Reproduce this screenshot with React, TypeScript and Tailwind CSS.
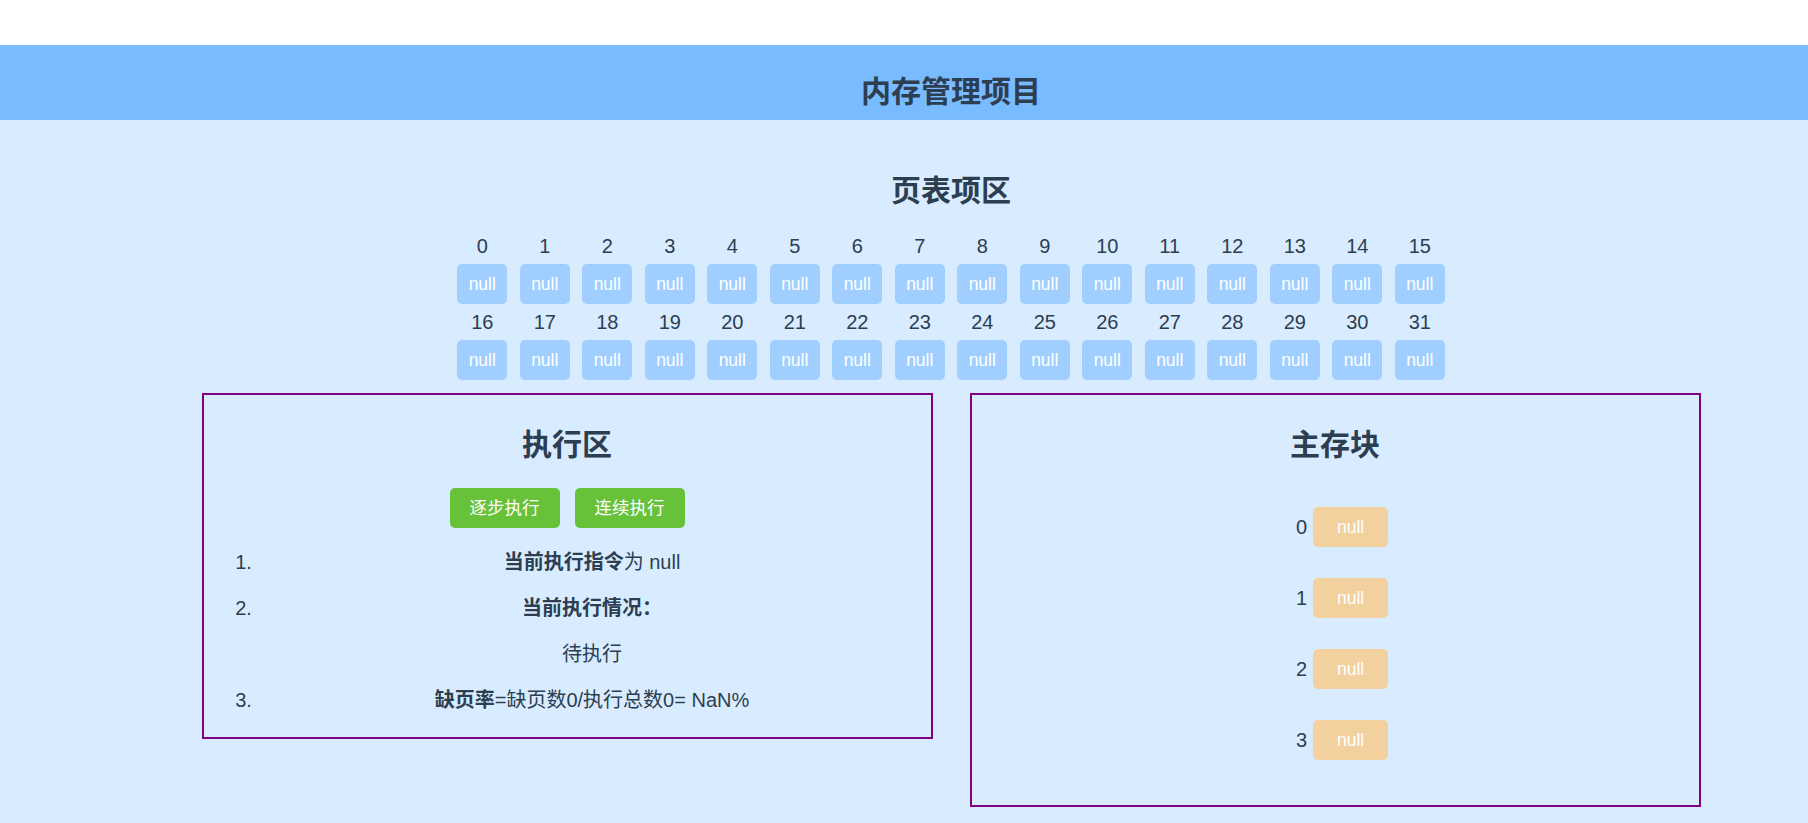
import React from "react";

const pages = Array.from({ length: 32 }, (_, i) => i);
const blocks = [0, 1, 2, 3];

function PageCell({ n }: { n: number }) {
  return (
    <div className="flex w-[50px] flex-col items-center">
      <div className="h-[24px] text-[20px] leading-[24px]">{n}</div>
      <div className="mt-[6px] flex h-[40px] w-[50px] items-center justify-center rounded-[5px] bg-[#a0cfff] text-[17.5px] text-white">
        null
      </div>
    </div>
  );
}

export default function App() {
  return (
    <div className="w-full overflow-hidden">
      <div className="min-h-[823px] w-[1902px] bg-[#d9ecff] font-['Liberation_Sans','Noto_Sans_CJK_SC',Arial,sans-serif] text-[#2c3e50]">
        <div className="h-[45px] bg-white" />
        <header className="h-[75px] bg-[#79bbff] pt-[32px] text-center">
          <h2 className="text-[30px] font-bold leading-[30px]">内存管理项目</h2>
        </header>

        <section className="pt-[56px]">
          <h2 className="text-center text-[30px] font-bold leading-[30px]">页表项区</h2>
          <div className="mt-[28px] flex flex-col items-center gap-[6px]">
            <div className="flex gap-[12.5px]">
              {pages.slice(0, 16).map((n) => (
                <PageCell key={n} n={n} />
              ))}
            </div>
            <div className="flex gap-[12.5px]">
              {pages.slice(16).map((n) => (
                <PageCell key={n} n={n} />
              ))}
            </div>
          </div>
        </section>

        <div className="mt-[13px] flex items-start justify-center gap-[37px]">
          <div className="h-[346px] w-[731px] border-2 border-[#800080] pt-[35px]">
            <h2 className="text-center text-[30px] font-bold leading-[30px]">执行区</h2>
            <div className="mt-[28px] flex justify-center gap-[15px]">
              <button className="h-[40px] w-[110px] rounded-[5px] bg-[#67c23a] text-[17.5px] text-white">
                逐步执行
              </button>
              <button className="h-[40px] w-[110px] rounded-[5px] bg-[#67c23a] text-[17.5px] text-white">
                连续执行
              </button>
            </div>
            <ol className="mt-[11px] list-outside list-decimal pl-[54px] pr-[4px] text-[20px] leading-[46px]">
              <li className="text-center">
                <b>当前执行指令</b>为 null
              </li>
              <li className="text-center">
                <div>
                  <b>当前执行情况：</b>
                </div>
                <div>待执行</div>
              </li>
              <li className="text-center">
                <b>缺页率</b>=缺页数0/执行总数0= NaN%
              </li>
            </ol>
          </div>

          <div className="h-[414px] w-[731px] border-2 border-[#800080] pt-[35px]">
            <h2 className="text-center text-[30px] font-bold leading-[30px]">主存块</h2>
            <div className="mt-[47px] flex flex-col gap-[31px]">
              {blocks.map((b) => (
                <div key={b} className="flex items-center justify-center gap-[6px] pl-[14px]">
                  <span className="text-[20px] leading-[40px]">{b}</span>
                  <div className="flex h-[40px] w-[75px] items-center justify-center rounded-[5px] bg-[#f3d19e] text-[17.5px] text-white">
                    null
                  </div>
                </div>
              ))}
            </div>
          </div>
        </div>
      </div>
    </div>
  );
}
